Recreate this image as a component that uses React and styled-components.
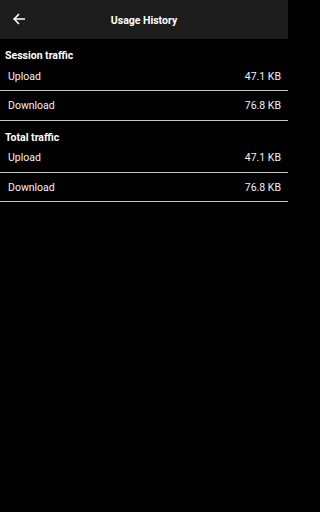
import React from 'react'
import styled, { createGlobalStyle } from 'styled-components'

const GlobalStyle = createGlobalStyle`
  html, body {
    margin: 0;
    padding: 0;
    background: #000;
  }
  body {
    font-family: Roboto, "Liberation Sans", sans-serif;
    color: #fff;
  }
`

const sections = [
  { title: 'Session traffic', rows: [{ label: 'Upload', value: '47.1 KB' }, { label: 'Download', value: '76.8 KB' }] },
  { title: 'Total traffic', rows: [{ label: 'Upload', value: '47.1 KB' }, { label: 'Download', value: '76.8 KB' }] },
]

const BackArrow = () => (
  <svg width="14" height="14" viewBox="0 0 24 24" fill="none" stroke="#fff" strokeWidth="2.6" strokeLinecap="square">
    <path d="M21 12H4" />
    <path d="M11 4.5L3.8 12l7.2 7.5" />
  </svg>
)

const App = () => {
  return (
    <Page>
      <GlobalStyle />
      <Toolbar>
        <BackButton><BackArrow /></BackButton>
        <Title>Usage History</Title>
      </Toolbar>
      {sections.map((section) => (
        <Section key={section.title}>
          <SectionTitle>{section.title}</SectionTitle>
          {section.rows.map((row) => (
            <Row key={row.label}>
              <span>{row.label}</span>
              <span>{row.value}</span>
            </Row>
          ))}
        </Section>
      ))}
    </Page>
  )
}

// the window is 288 wide; keep the layout at that width
const Page = styled.div`
  width: 100%;
  max-width: 288px;
  min-height: 100vh;
  background: #000;
`

const Toolbar = styled.header`
  height: 39px;
  background: #1c1c1c;
  display: flex;
  align-items: center;
  justify-content: center;
  position: relative;
`

const BackButton = styled.div`
  position: absolute;
  left: 12px;
  top: 12px;
  display: flex;
`

const Title = styled.h1`
  margin: 0;
  padding-top: 1px;
  font-size: 10.5px;
  font-weight: 700;
  color: #fff;
`

const Section = styled.section`
  display: flex;
  flex-direction: column;
`

const SectionTitle = styled.div`
  height: 22.5px;
  padding: 10px 0 0 5px;
  box-sizing: border-box;
  font-size: 10.5px;
  font-weight: 700;
  line-height: 13px;
`

const Row = styled.div`
  height: 29.5px;
  box-sizing: border-box;
  padding: 1px 7px 0 8px;
  display: flex;
  align-items: center;
  justify-content: space-between;
  font-size: 10.5px;
  color: #f2f2f2;
  border-bottom: 1.5px solid #c8c8c8;
`

export default App
